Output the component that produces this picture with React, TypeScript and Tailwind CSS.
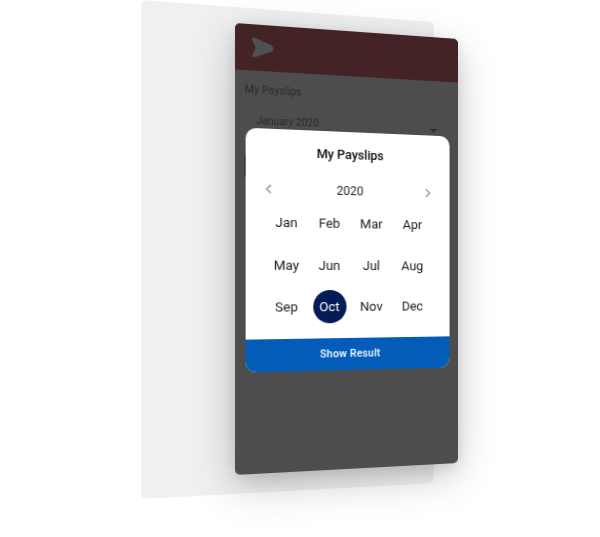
import { ReactNode } from "react";

type Pt = [number, number];

// homography from a w x h box to four screen corners (tl, tr, br, bl)
function warp(w: number, h: number, c: Pt[]) {
  const [p0, p1, p2, p3] = c;
  const dx1 = p1[0] - p2[0];
  const dx2 = p3[0] - p2[0];
  const sx = p0[0] - p1[0] + p2[0] - p3[0];
  const dy1 = p1[1] - p2[1];
  const dy2 = p3[1] - p2[1];
  const sy = p0[1] - p1[1] + p2[1] - p3[1];
  const den = dx1 * dy2 - dx2 * dy1;
  const g = (sx * dy2 - dx2 * sy) / den;
  const k = (dx1 * sy - sx * dy1) / den;
  const a = p1[0] - p0[0] + g * p1[0];
  const b = p3[0] - p0[0] + k * p3[0];
  const d = p1[1] - p0[1] + g * p1[1];
  const e = p3[1] - p0[1] + k * p3[1];
  const m = [a / w, d / w, 0, g / w, b / h, e / h, 0, k / h, 0, 0, 1, 0, p0[0], p0[1], 0, 1];
  return `matrix3d(${m.join(",")})`;
}

const backCorners: Pt[] = [[141, 0], [434, 22], [434, 483], [141, 499]];
const phoneCorners: Pt[] = [[235, 23], [458, 39], [458, 463], [235, 475]];

const months = ["Jan", "Feb", "Mar", "Apr", "May", "Jun", "Jul", "Aug", "Sep", "Oct", "Nov", "Dec"];

function Month({ children, active }: { children: ReactNode; active?: boolean }) {
  return (
    <div className="flex h-[41.5px] items-center justify-center">
      <div
        className={
          active
            ? "flex h-[33px] w-[33px] items-center justify-center rounded-full bg-[#031c55] text-white"
            : "text-[#1a1a1a]"
        }
      >
        {children}
      </div>
    </div>
  );
}

function PayslipModal() {
  return (
    <div className="absolute left-[10px] top-[101px] flex h-[238px] w-[204px] flex-col overflow-hidden rounded-[10px] bg-white">
      <div className="pt-[14px] text-center text-[12.5px] font-medium leading-[18px] text-[#0a0a0a]">My Payslips</div>
      <div className="mt-[18px] flex items-center justify-between pl-[17px] pr-[18px] text-[12px] leading-[18px] text-[#1f1f1f]">
        <svg width="10" height="12" viewBox="0 0 10 12" fill="none" stroke="#a3a3a3" strokeWidth="1.7">
          <path d="M7 2 3 6l4 4" />
        </svg>
        <span>2020</span>
        <svg width="10" height="12" viewBox="0 0 10 12" fill="none" stroke="#a3a3a3" strokeWidth="1.7">
          <path d="m3 2 4 4-4 4" />
        </svg>
      </div>
      <div className="mt-[3px] grid grid-cols-4 px-[18px] text-[13px]">
        {months.map((m) => (
          <Month key={m} active={m === "Oct"}>
            {m}
          </Month>
        ))}
      </div>
      <div className="mt-auto flex h-[32px] items-center justify-center bg-[#045cb9] text-[10.5px] font-medium tracking-[0.2px] text-white">
        Show Result
      </div>
    </div>
  );
}

export default function App() {
  return (
    <div className="relative h-[537px] w-[600px] overflow-hidden bg-white font-['Roboto',sans-serif]">
      <div
        className="absolute left-0 top-0 h-[490px] w-[293px] origin-top-left rounded-[5px] bg-[#eff0f1]"
        style={{ transform: warp(293, 490, backCorners) }}
      />
      <div
        className="absolute left-0 top-0 flex h-[438px] w-[223px] origin-top-left flex-col rounded-[5px] bg-[#4d4d4d] shadow-[0_4px_16px_rgba(0,0,0,0.1),0_12px_40px_rgba(0,0,0,0.22)]"
        style={{ transform: warp(223, 438, phoneCorners) }}
      >
        <div className="flex h-[45px] items-center rounded-t-[5px] bg-[#442326] pl-[14px]">
          <svg width="23" height="21" viewBox="0 0 23 21">
            <path
              d="M3.500 2.500 20 9Q21 10.300 20 12L4 18.500 7.500 10.500Z"
              fill="#505050"
              stroke="#505050"
              strokeWidth="3.500"
              strokeLinejoin="round"
            />
          </svg>
        </div>
        <div className="relative flex-1 pl-[9px] pr-[10px] text-[#2a2a2a]">
          <div className="pt-[11px] text-[10.3px] leading-[16px]">My Payslips</div>
          <div className="mt-[14px] flex items-center justify-between pl-[11px] pr-[12px] text-[10px] leading-[16px]">
            <span>January 2020</span>
            <div className="mt-[3px] h-0 w-0 border-x-[4px] border-t-[4px] border-x-transparent border-t-[#2a2a2a]" />
          </div>
          <div className="absolute left-[9px] top-[80px] h-[26px] w-[4px] rounded-l-[4px] bg-[#262626]" />
        </div>
        <PayslipModal />
      </div>
    </div>
  );
}
